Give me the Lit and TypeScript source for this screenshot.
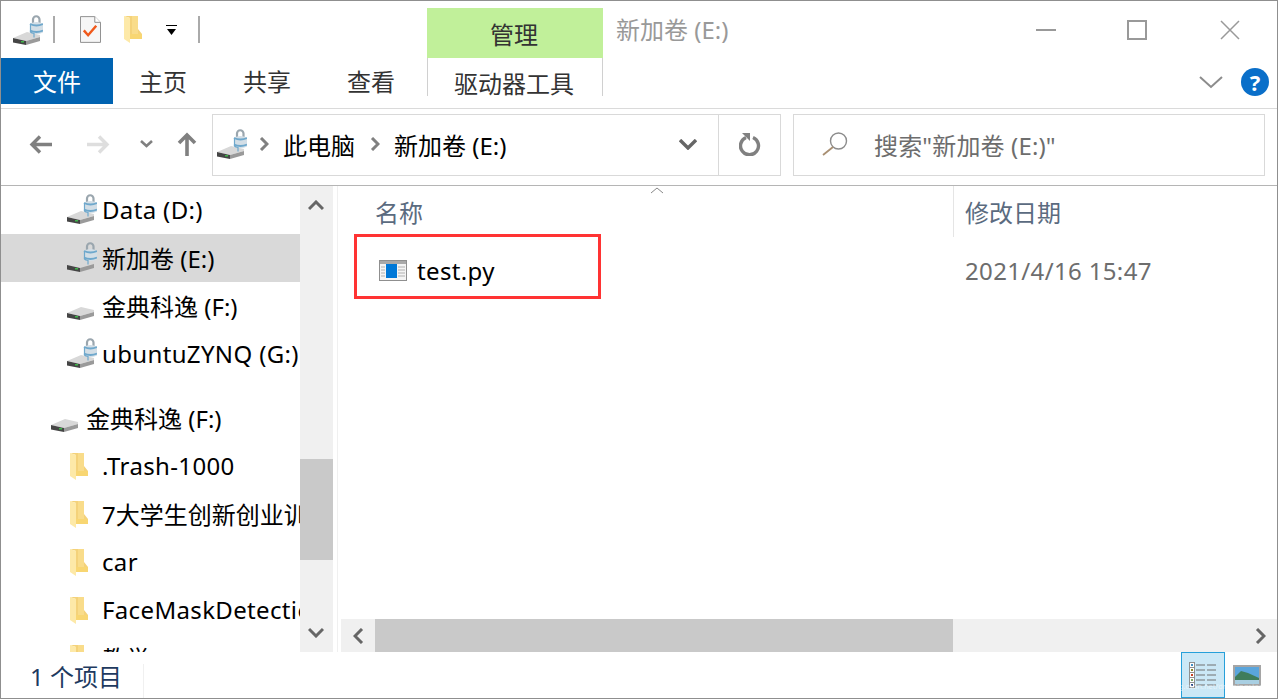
import { LitElement, html, svg, css } from 'lit';
import { customElement } from 'lit/decorators.js';

const folderShape = svg`
  <polygon points="3,3 17,3 17,16 21,21 21,26 9,26 9,5" fill="#f4d27a" />
  <rect x="11" y="3" width="6" height="18" fill="#f9dc8a" />
  <polygon points="3,3 9,5 9,30 3,26" fill="#fde9a8" />
  <rect x="9" y="21" width="12" height="5" fill="#f8d672" />
`;

// drive icon, with or without the bitlocker padlock
const drive = (locked: boolean) => html`
  <svg class="ico" width="30" height="30" viewBox="0 0 30 30">
    <polygon points="0,23 14,17 27,20 27,22 13,26" fill="#d8d8d8" />
    <polygon points="0,23 13,26 13,30 0,27.5" fill="#454545" />
    <polygon points="13,26 27,22 27,26 13,30" fill="#9a9a9a" />
    <rect x="8" y="26" width="3" height="1.5" fill="#3fb54a" />
    ${locked
      ? svg`
          <path d="M20 8V4.5a3.2 3.2 0 0 1 6.5 0V8" fill="none" stroke="#9aa6ae" stroke-width="2.2" />
          <path d="M17 8.5q6.5-3 13 0v9q-6.5 3-13 0z" fill="#d3dee6" />
          <path d="M17 9q6.5 3 13 0M17 15.5q6.5 3 13 0" fill="none" stroke="#6fa8cc" stroke-width="1.8" />
          <path d="M17.5 9v8q1 1 3.5 1.5v4" fill="none" stroke="#6fa8cc" stroke-width="1.2" />
        `
      : ''}
  </svg>
`;

const folder = () => html`
  <svg class="ico" width="30" height="30" viewBox="0 0 30 30">${folderShape}</svg>
`;

const chevron = (points: string, w: number, h: number, color: string, sw = 3) => html`
  <svg width=${w} height=${h} viewBox="0 0 ${w} ${h}">
    <polyline points=${points} fill="none" stroke=${color} stroke-width=${sw} />
  </svg>
`;

const NAV = [
  { label: 'Data (D:)', icon: 'lock', level: 1, latin: true },
  { label: '新加卷 (E:)', icon: 'lock', level: 1, selected: true },
  { label: '金典科逸 (F:)', icon: 'drive', level: 1 },
  { label: 'ubuntuZYNQ (G:)', icon: 'lock', level: 1, latin: true },
  { gap: true },
  { label: '金典科逸 (F:)', icon: 'drive', level: 0 },
  { label: '.Trash-1000', icon: 'folder', level: 1, latin: true },
  { label: '7大学生创新创业训练', icon: 'folder', level: 1 },
  { label: 'car', icon: 'folder', level: 1, latin: true },
  { label: 'FaceMaskDetection', icon: 'folder', level: 1, latin: true },
  { label: '教学', icon: 'folder', level: 1 },
];

@customElement('app-root')
export class AppRoot extends LitElement {
  static styles = css`
    :host {
      display: block;
      width: 1278px;
      height: 699px;
      font-family: 'Noto Sans', 'Noto Sans CJK SC', sans-serif;
      font-size: 24px;
      color: #000;
    }

    svg {
      display: block;
      flex: none;
    }

    .latin {
      letter-spacing: 0.35px;
    }

    .window {
      box-sizing: border-box;
      height: 100%;
      display: flex;
      flex-direction: column;
      background: #fff;
      border: 1px solid #8f8f8f;
      overflow: hidden;
    }

    /* title bar + ribbon tabs */
    .ribbon {
      display: grid;
      grid-template-columns: 426px 176px 1fr;
      grid-template-rows: 57px 50px;
      flex: none;
      border-bottom: 1px solid #dadada;
    }

    .quick {
      display: flex;
      align-items: center;
      padding: 0 0 0 12px;
    }

    .qsep {
      width: 2px;
      height: 27px;
      background: #aaa;
    }

    .manage {
      align-self: end;
      box-sizing: border-box;
      height: 50px;
      line-height: 54px;
      padding-right: 2px;
      text-align: center;
      background: #c1f09a;
      color: #333;
    }

    .titlebar {
      display: flex;
      align-items: center;
      padding-left: 13px;
      color: #999;
    }

    .titlebar span {
      margin-top: -2px;
    }

    .winbtns {
      margin-left: auto;
      display: flex;
      align-items: center;
      padding-right: 37px;
    }

    .tabs {
      display: flex;
      height: 46px;
    }

    .tab {
      width: 104px;
      line-height: 48px;
      text-align: center;
      color: #333;
    }

    .tab.filetab {
      width: 112px;
      margin-right: -2px;
      background: #0063b1;
      color: #fff;
    }

    .tool-tab {
      height: 38px;
      line-height: 52px;
      overflow: hidden;
      padding-right: 2px;
      text-align: center;
      color: #333;
      border-left: 1px solid #d0d0d0;
      border-right: 1px solid #d0d0d0;
      box-sizing: border-box;
    }

    .ribbon-right {
      display: flex;
      align-items: center;
      justify-content: flex-end;
      gap: 18px;
      height: 48px;
      padding-right: 8px;
    }

    .help {
      width: 28px;
      height: 28px;
      border-radius: 50%;
      background: #0a6fc9;
      color: #fff;
      font-size: 22px;
      font-weight: 700;
      line-height: 28px;
      text-align: center;
    }

    /* address row */
    .addressbar {
      flex: none;
      display: flex;
      align-items: flex-start;
      height: 77px;
      padding-top: 5px;
      border-bottom: 1px solid #b5b5b5;
      box-sizing: border-box;
    }

    .navbtns {
      width: 211px;
      height: 62px;
      padding-bottom: 2px;
      box-sizing: border-box;
      flex: none;
      display: flex;
      align-items: center;
    }

    .navbtn {
      display: flex;
      justify-content: center;
    }

    .path,
    .search {
      box-sizing: border-box;
      height: 62px;
      border: 1px solid #d9d9d9;
      display: flex;
      align-items: center;
    }

    .path {
      width: 569px;
    }

    .path-main {
      box-sizing: border-box;
      display: flex;
      align-items: center;
      flex: 1;
      height: 100%;
      padding: 0 0 2px 4px;
      border-right: 1px solid #d9d9d9;
    }

    .crumb-sep {
      margin: 0 14px 0 12px;
    }

    .crumb-sep.second {
      margin: 0 14px 0 15px;
    }

    .path-drop {
      margin-left: auto;
      margin-right: 21px;
    }

    .refresh {
      width: 61px;
      display: flex;
      justify-content: center;
      padding-bottom: 2px;
    }

    .search {
      width: 472px;
      margin-left: 12px;
      padding: 0 0 2px 28px;
      gap: 26px;
      color: #6d6d6d;
      letter-spacing: 0.15px;
    }

    /* body */
    .body {
      flex: 1;
      display: flex;
      min-height: 0;
    }

    .nav {
      width: 332px;
      flex: none;
      display: flex;
    }

    .tree {
      width: 299px;
      flex: none;
      overflow: hidden;
    }

    .row {
      height: 48px;
      display: flex;
      align-items: center;
      gap: 5px;
      white-space: nowrap;
      overflow: hidden;
    }

    .row .ico {
      margin-top: -2px;
    }

    .row span {
      padding-bottom: 2px;
    }

    .row.l0 {
      padding-left: 50px;
    }

    .row.l1 {
      padding-left: 66px;
    }

    .row.selected {
      background: #d9d9d9;
    }

    .tree-gap {
      height: 16px;
    }

    .vscroll {
      width: 33px;
      flex: none;
      background: #f0f0f0;
      display: flex;
      flex-direction: column;
      align-items: center;
    }

    .vscroll .btn {
      height: 39px;
      flex: none;
      display: flex;
      align-items: center;
      justify-content: center;
      padding-right: 2px;
    }

    .vscroll .track {
      flex: 1;
      width: 100%;
    }

    .vthumb {
      margin-top: 234px;
      height: 101px;
      background: #c9c9c9;
    }

    .divider {
      width: 1px;
      flex: none;
      margin: 0 3px 0 4px;
      background: #f0f0f0;
    }

    .main {
      flex: 1;
      min-width: 0;
      position: relative;
      display: flex;
      flex-direction: column;
    }

    .head {
      display: flex;
      height: 51px;
      flex: none;
      color: #5b6b7f;
    }

    .cell-name {
      width: 612px;
      flex: none;
      box-sizing: border-box;
      padding-left: 34px;
      line-height: 53px;
    }

    .cell-date {
      padding-left: 11px;
      line-height: 53px;
      border-left: 1px solid #e5e5e5;
    }

    .sort {
      position: absolute;
      left: 309px;
      top: 1px;
    }

    .files {
      flex: 1;
      padding-top: 9px;
    }

    .file {
      display: flex;
      align-items: center;
      height: 48px;
    }

    .file-name {
      width: 612px;
      flex: none;
      box-sizing: border-box;
      padding-left: 38px;
      display: flex;
      align-items: center;
      gap: 10px;
    }

    .file-date {
      padding-left: 12px;
      color: #6d6d6d;
    }

    .mark {
      position: absolute;
      left: 13px;
      top: 48px;
      width: 247px;
      height: 65px;
      box-sizing: border-box;
      border: 3px solid #ff3333;
    }

    .hscroll {
      flex: none;
      height: 33px;
      display: flex;
      background: #f0f0f0;
    }

    .hscroll .btn {
      display: flex;
      align-items: center;
      justify-content: center;
      flex: none;
    }

    .hthumb {
      width: 578px;
      background: #c9c9c9;
      flex: none;
    }

    /* status bar */
    .status {
      flex: none;
      height: 46px;
      display: flex;
      align-items: center;
      padding-left: 29px;
      color: #1e3a5f;
      position: relative;
    }

    .status-sep {
      position: absolute;
      left: 142px;
      top: 12px;
      width: 1px;
      height: 34px;
      background: #f0f0f0;
    }

    .views {
      margin-left: auto;
      display: flex;
      align-items: center;
      height: 100%;
      padding-right: 16px;
      gap: 8px;
    }

    .view-on {
      box-sizing: border-box;
      width: 44px;
      height: 46px;
      background: #cbe8f6;
      border: 1px solid #26a0da;
      display: flex;
      align-items: center;
      justify-content: center;
    }

    .watermark {
      position: absolute;
      right: 9px;
      bottom: 7px;
      font-size: 7.5px;
      line-height: 10px;
      color: rgba(255, 255, 255, 0.55);
      white-space: nowrap;
    }
  `;

  render() {
    return html`
      <div class="window">
        <div class="ribbon">
          <div class="quick">
            ${drive(true)}
            <div class="qsep" style="margin-left:10px"></div>
            <svg style="margin-left:25px" width="21" height="27" viewBox="0 0 22 28">
              <path d="M.5.5h15l6 6v21H.5z" fill="#f6f6f6" stroke="#8c8c8c" />
              <path d="M15.5.5v6h6" fill="#fff" stroke="#8c8c8c" />
              <polyline points="4,15 8.5,20 17,10" fill="none" stroke="#f0591b" stroke-width="2.6" />
            </svg>
            <svg style="margin-left:23px" width="18" height="27" viewBox="3 3 18 27">${folderShape}</svg>
            <svg style="margin-left:24px" width="11" height="10" viewBox="0 0 11 10">
              <rect width="11" height="1" fill="#000" />
              <polygon points="1,4 10,4 5.5,10" fill="#000" />
            </svg>
            <div class="qsep" style="margin-left:21px"></div>
          </div>
          <div class="manage">管理</div>
          <div class="titlebar">
            <span>新加卷 (E:)</span>
            <div class="winbtns">
              <svg width="20" height="2" viewBox="0 0 20 2"><rect width="20" height="2" fill="#999" /></svg>
              <svg style="margin-left:71px" width="20" height="20" viewBox="0 0 20 20"><rect x="1" y="1" width="18" height="18" fill="none" stroke="#999" stroke-width="2" /></svg>
              <svg style="margin-left:73px" width="20" height="20" viewBox="0 0 20 20"><path d="M1 1l18 18M19 1L1 19" stroke="#999" stroke-width="1.5" /></svg>
            </div>
          </div>
          <div class="tabs">
            <div class="tab filetab">文件</div>
            <div class="tab">主页</div>
            <div class="tab">共享</div>
            <div class="tab">查看</div>
          </div>
          <div class="tool-tab">驱动器工具</div>
          <div class="ribbon-right">
            ${chevron('1,1 12,11 23,1', 24, 13, '#8c8c8c', 2)}
            <div class="help">?</div>
          </div>
        </div>

        <div class="addressbar">
          <div class="navbtns">
            <div class="navbtn" style="margin-left:27px;width:24px">
              <svg width="23" height="19" viewBox="0 0 23 19"><path d="M23 9.5H3M11 1.5l-8 8 8 8" fill="none" stroke="#808080" stroke-width="3.4" /></svg>
            </div>
            <div class="navbtn" style="margin-left:34px;width:24px">
              <svg width="23" height="19" viewBox="0 0 23 19"><path d="M0 9.5h20M12 1.5l8 8-8 8" fill="none" stroke="#dedede" stroke-width="3.4" /></svg>
            </div>
            <div class="navbtn" style="margin-left:29px;width:14px">
              ${chevron('1,1 6.5,6 12,1', 13, 8, '#808080', 2.6)}
            </div>
            <div class="navbtn" style="margin-left:22px;width:24px">
              <svg width="20" height="24" viewBox="0 0 20 24"><path d="M10 24V3M2 11l8-8 8 8" fill="none" stroke="#808080" stroke-width="3.6" /></svg>
            </div>
          </div>
          <div class="path">
            <div class="path-main">
              ${drive(true)}
              <span class="crumb-sep">${chevron('2,1 8,7 2,13', 10, 14, '#808080', 3)}</span>
              <span>此电脑</span>
              <span class="crumb-sep second">${chevron('2,1 8,7 2,13', 10, 14, '#808080', 3)}</span>
              <span>新加卷 (E:)</span>
              <span class="path-drop">${chevron('1,1 9,9 17,1', 18, 11, '#666', 3.4)}</span>
            </div>
            <div class="refresh">
              <svg width="22" height="24" viewBox="0 0 22 24">
                <path d="M7 5.5a9 9 0 1 0 7 0" fill="none" stroke="#808080" stroke-width="3.4" />
                <polygon points="3,1 11,1 11,9" fill="#808080" />
              </svg>
            </div>
          </div>
          <div class="search">
            <svg width="26" height="24" viewBox="0 0 26 24">
              <circle cx="16.5" cy="9" r="8" fill="none" stroke="#8c8c8c" stroke-width="1.4" />
              <path d="M11 15L1 23" stroke="#a88f72" stroke-width="1.8" />
            </svg>
            <span>搜索"新加卷 (E:)"</span>
          </div>
        </div>

        <div class="body">
          <div class="nav">
            <div class="tree">
              ${NAV.map((n) =>
                n.gap
                  ? html`<div class="tree-gap"></div>`
                  : html`
                      <div class="row l${n.level} ${n.selected ? 'selected' : ''}">
                        ${n.icon === 'folder' ? folder() : drive(n.icon === 'lock')}
                        <span class=${n.latin ? 'latin' : ''}>${n.label}</span>
                      </div>
                    `
              )}
            </div>
            <div class="vscroll">
              <div class="btn">${chevron('1,9 8,2 15,9', 16, 11, '#666', 3)}</div>
              <div class="track"><div class="vthumb"></div></div>
              <div class="btn">${chevron('1,2 8,9 15,2', 16, 11, '#666', 3)}</div>
            </div>
          </div>
          <div class="divider"></div>
          <div class="main">
            <div class="head">
              <div class="cell-name">名称</div>
              <div class="cell-date">修改日期</div>
            </div>
            <div class="sort">${chevron('1,6 7,1 13,6', 14, 7, '#888', 1)}</div>
            <div class="files">
              <div class="file">
                <div class="file-name">
                  <svg width="28" height="21" viewBox="0 0 28 21">
                    <rect x=".5" y=".5" width="27" height="20" fill="#f4f4f4" stroke="#8f8f8f" />
                    <rect x="1" y="1" width="26" height="3" fill="#a9a9a9" />
                    <rect x="7" y="4" width="11" height="14" fill="#0078d7" />
                    <path d="M2 7h4M2 10h4M2 13h4M2 16h4M19 7h7M19 10h7M19 13h7M19 16h7" stroke="#b0b0b0" />
                  </svg>
                  <span class="latin">test.py</span>
                </div>
                <div class="file-date latin">2021/4/16 15:47</div>
              </div>
            </div>
            <div class="mark"></div>
            <div class="hscroll">
              <div class="btn" style="width:34px">${chevron('9,1 2,8 9,15', 11, 16, '#666', 3)}</div>
              <div class="hthumb"></div>
              <div class="btn" style="margin-left:auto;width:34px">${chevron('2,1 9,8 2,15', 11, 16, '#666', 3)}</div>
            </div>
          </div>
        </div>

        <div class="status">
          <span>1 个项目</span>
          <div class="status-sep"></div>
          <div class="views">
            <div class="view-on">
              <svg width="28" height="26" viewBox="0 0 28 26">
                <g fill="#fff" stroke="#8f8f8f">
                  <rect x=".5" y=".5" width="5" height="5" />
                  <rect x=".5" y="5.5" width="5" height="5" />
                  <rect x=".5" y="10.5" width="5" height="5" />
                  <rect x=".5" y="15.5" width="5" height="5" />
                  <rect x=".5" y="20.5" width="5" height="5" />
                </g>
                <rect x="2" y="2" width="2" height="2" fill="#3f8fc4" />
                <rect x="2" y="7" width="2" height="2" fill="#8a8a2a" />
                <rect x="2" y="12" width="2" height="2" fill="#c8401e" />
                <rect x="2" y="17" width="2" height="2" fill="#7fa860" />
                <rect x="2" y="22" width="2" height="2" fill="#2a4f8f" />
                <path d="M7 3h9M18 3h9M7 8h9M18 8h9M7 13h9M18 13h9M7 18h9M18 18h9M7 23h9M18 23h9" stroke="#707070" />
              </svg>
            </div>
            <svg width="28" height="21" viewBox="0 0 28 21">
              <rect x="1" y="1" width="26" height="19" fill="#5aa5dc" stroke="#a5a5a5" stroke-width="2" />
              <polygon points="2,12 8,6 15,8 26,13 26,15 2,15" fill="#3f7d5c" />
              <rect x="2" y="15" width="24" height="4" fill="#a9cfe2" />
            </svg>
          </div>
          <div class="watermark">https://blog.csdn.net/drippingstone</div>
        </div>
      </div>
    `;
  }
}
